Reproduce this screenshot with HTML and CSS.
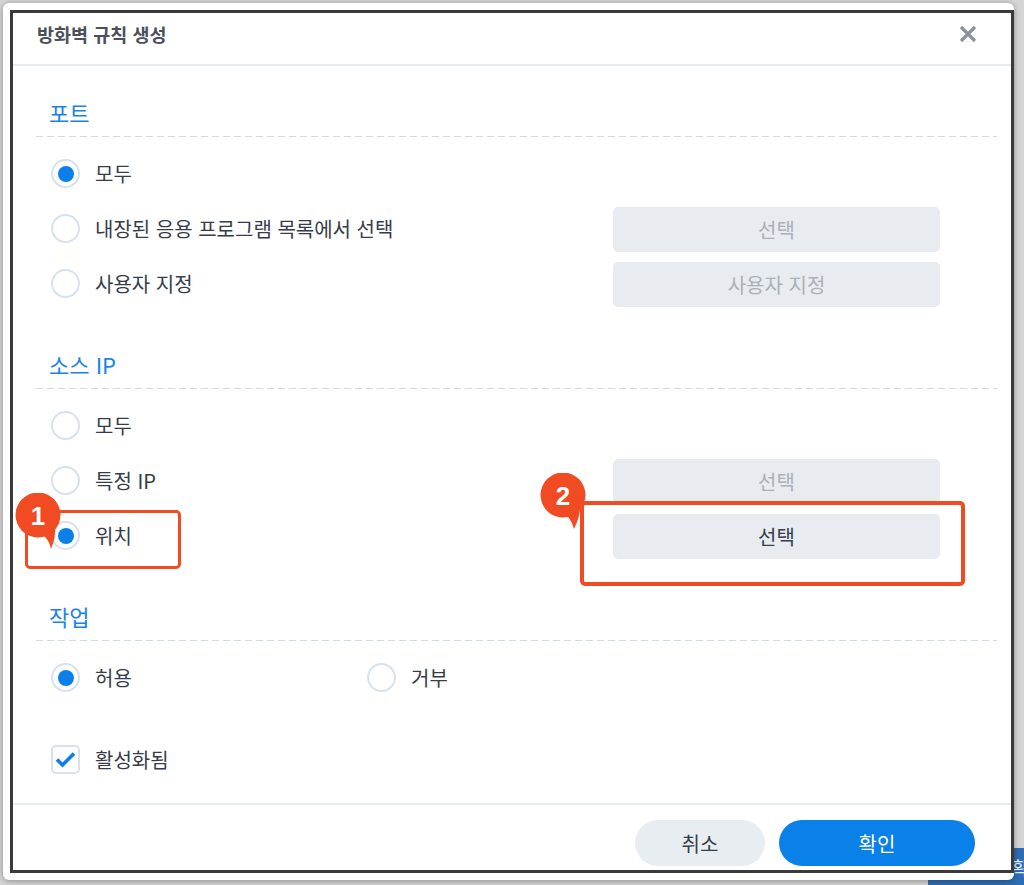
FILE: index.html
```html
<!DOCTYPE html>
<html lang="ko">
<head>
    <meta charset="UTF-8">
    <meta name="viewport" content="width=device-width, initial-scale=1.0">
    <title>방화벽 규칙 생성</title>
    <link rel="stylesheet" href="styles.css">
</head>
<body>
    <div class="behind-btn">확</div>

    <div class="dialog">
        <div class="frame">
            <div class="dialog-header">
                <h1 class="dialog-title">방화벽 규칙 생성</h1>
                <svg class="close" width="18" height="18" viewBox="0 0 18 18">
                    <path d="M2 2 L16 16 M16 2 L2 16" stroke="#8c929a" stroke-width="3.2" fill="none"/>
                </svg>
            </div>

            <div class="dialog-body">
                <div class="section">
                    <div class="section-title">포트</div>
                    <div class="options">
                        <div class="row">
                            <label class="radio"><span class="dot checked"></span>모두</label>
                        </div>
                        <div class="row">
                            <label class="radio"><span class="dot"></span>내장된 응용 프로그램 목록에서 선택</label>
                            <button class="btn" disabled>선택</button>
                        </div>
                        <div class="row">
                            <label class="radio"><span class="dot"></span>사용자 지정</label>
                            <button class="btn" disabled>사용자 지정</button>
                        </div>
                    </div>
                </div>

                <div class="section">
                    <div class="section-title">소스 IP</div>
                    <div class="options">
                        <div class="row">
                            <label class="radio"><span class="dot"></span>모두</label>
                        </div>
                        <div class="row">
                            <label class="radio"><span class="dot"></span>특정 IP</label>
                            <button class="btn" disabled>선택</button>
                        </div>
                        <div class="row">
                            <label class="radio"><span class="dot checked"></span>위치</label>
                            <button class="btn">선택</button>
                        </div>
                    </div>
                </div>

                <div class="section">
                    <div class="section-title">작업</div>
                    <div class="options">
                        <div class="row row-inline">
                            <label class="radio radio-wide"><span class="dot checked"></span>허용</label>
                            <label class="radio"><span class="dot"></span>거부</label>
                        </div>
                    </div>
                </div>

                <div class="row check-row">
                    <label class="radio">
                        <span class="checkbox">
                            <svg width="21" height="17" viewBox="0 0 21 17">
                                <path d="M2 8.5 L7.5 14 L19 2.5" stroke="#0a80e8" stroke-width="3.6" fill="none"/>
                            </svg>
                        </span>
                        활성화됨
                    </label>
                </div>
            </div>

            <div class="dialog-footer">
                <button class="pill pill-cancel">취소</button>
                <button class="pill pill-ok">확인</button>
            </div>
        </div>
    </div>

    <!-- step markers -->
    <div class="mark mark-1"></div>
    <div class="mark mark-2"></div>
    <div class="badge badge-1">
        <svg width="48" height="60" viewBox="0 0 48 60">
            <circle cx="23" cy="22" r="22.5" fill="#f04b23"/>
            <path d="M22 40 Q33 42 36 56 Q41 44 40 34 Z" fill="#f04b23"/>
        </svg>
        <span>1</span>
    </div>
    <div class="badge badge-2">
        <svg width="48" height="60" viewBox="0 0 48 60">
            <circle cx="23" cy="22" r="22.5" fill="#f04b23"/>
            <path d="M22 40 Q30 42 34 56 Q40 44 40 34 Z" fill="#f04b23"/>
        </svg>
        <span>2</span>
    </div>
</body>
</html>
```

FILE: styles.css
```css
* {
    box-sizing: border-box;
}
body {
    margin: 0;
    padding: 3px;
    height: 885px;
    overflow: hidden;
    position: relative;
    background-color: #d5d5d5;
    font-family: "Noto Sans CJK KR", "Noto Sans", sans-serif;
    color: #3d4451;
}
.behind-btn {
    position: absolute;
    left: 928px;
    top: 848px;
    width: 96px;
    height: 37px;
    background-color: #2e6db5;
    color: #e8eef6;
    font-size: 18px;
    padding: 6px 0 0 84px;
    overflow: hidden;
}
.dialog {
    position: relative;
    width: 1011px;
    height: 877px;
    background-color: #fff;
    border-radius: 6px;
    box-shadow: 0 1px 6px rgba(0, 0, 0, 0.35);
    padding: 7px 0 7px 7px;
}
.frame {
    height: 863px;
    border: 3px solid #3a3a3a;
    display: flex;
    flex-direction: column;
}
.dialog-header {
    height: 53px;
    flex-shrink: 0;
    display: flex;
    align-items: center;
    justify-content: space-between;
    padding: 0 34px 10px 24px;
    border-bottom: 2px solid #e6ebf0;
}
.dialog-title {
    margin: 0;
    font-size: 18.5px;
    font-weight: 700;
    color: #4a505c;
}
.close {
    display: block;
}
.dialog-body {
    flex: 1;
    padding: 32px 14px 0 23px;
}
.section + .section {
    margin-top: 43px;
}
.section-title {
    font-size: 22px;
    line-height: 28px;
    color: #1a84e6;
    padding: 0 0 11px 13px;
    background: repeating-linear-gradient(to right, #cfdbe7 0 7px, transparent 7px 11px) left bottom / 100% 1px no-repeat;
}
.options {
    padding: 15px 0 0 15px;
    display: flex;
    flex-direction: column;
    gap: 10px;
}
.row {
    height: 45px;
    display: flex;
    align-items: center;
    justify-content: space-between;
    padding-right: 57px;
}
.row-inline {
    justify-content: flex-start;
}
.radio {
    display: flex;
    align-items: center;
    gap: 15px;
    font-size: 20px;
    line-height: 26px;
    padding-bottom: 2px;
    color: #363d4a;
}
.radio-wide {
    width: 316px;
}
.dot {
    width: 29px;
    height: 29px;
    border-radius: 50%;
    border: 2px solid #d8e2ec;
    background-color: #fff;
    display: flex;
    align-items: center;
    justify-content: center;
}
.dot.checked::after {
    content: "";
    width: 16px;
    height: 16px;
    border-radius: 50%;
    background-color: #0a80e8;
}
.btn {
    width: 327px;
    height: 45px;
    border: none;
    border-radius: 5px;
    background-color: #e8ecf1;
    font-family: inherit;
    font-size: 20px;
    color: #363d4a;
}
.btn:disabled {
    color: #aab0b8;
}
.check-row {
    margin-top: 37px;
    padding-left: 15px;
}
.checkbox {
    width: 29px;
    height: 29px;
    border: 2px solid #d8e2ec;
    border-radius: 5px;
    display: flex;
    align-items: center;
    justify-content: center;
}
.dialog-footer {
    height: 67px;
    flex-shrink: 0;
    border-top: 2px solid #e6ebf0;
    display: flex;
    justify-content: flex-end;
    gap: 14px;
    padding: 15px 36px 0 0;
}
.pill {
    height: 46px;
    border: none;
    border-radius: 23px;
    font-family: inherit;
    font-size: 20px;
}
.pill-cancel {
    width: 130px;
    background-color: #e8edf2;
    color: #363d4a;
}
.pill-ok {
    width: 196px;
    background-color: #0a80e9;
    color: #fff;
}
.mark {
    position: absolute;
    border: 3px solid #f04b23;
    border-radius: 5px;
}
.mark-1 {
    left: 25px;
    top: 510px;
    width: 156px;
    height: 59px;
}
.mark-2 {
    left: 580px;
    top: 501px;
    width: 385px;
    height: 85px;
    border-width: 4px;
}
.badge {
    position: absolute;
    width: 48px;
    height: 60px;
}
.badge svg {
    display: block;
}
.badge span {
    position: absolute;
    left: 0;
    top: 5px;
    width: 46px;
    text-align: center;
    font-family: "Liberation Sans", Arial, sans-serif;
    font-weight: 700;
    font-size: 26px;
    line-height: 36px;
    color: #fff;
}
.badge-1 {
    left: 15px;
    top: 493px;
}
.badge-2 {
    left: 540px;
    top: 473px;
}
```
